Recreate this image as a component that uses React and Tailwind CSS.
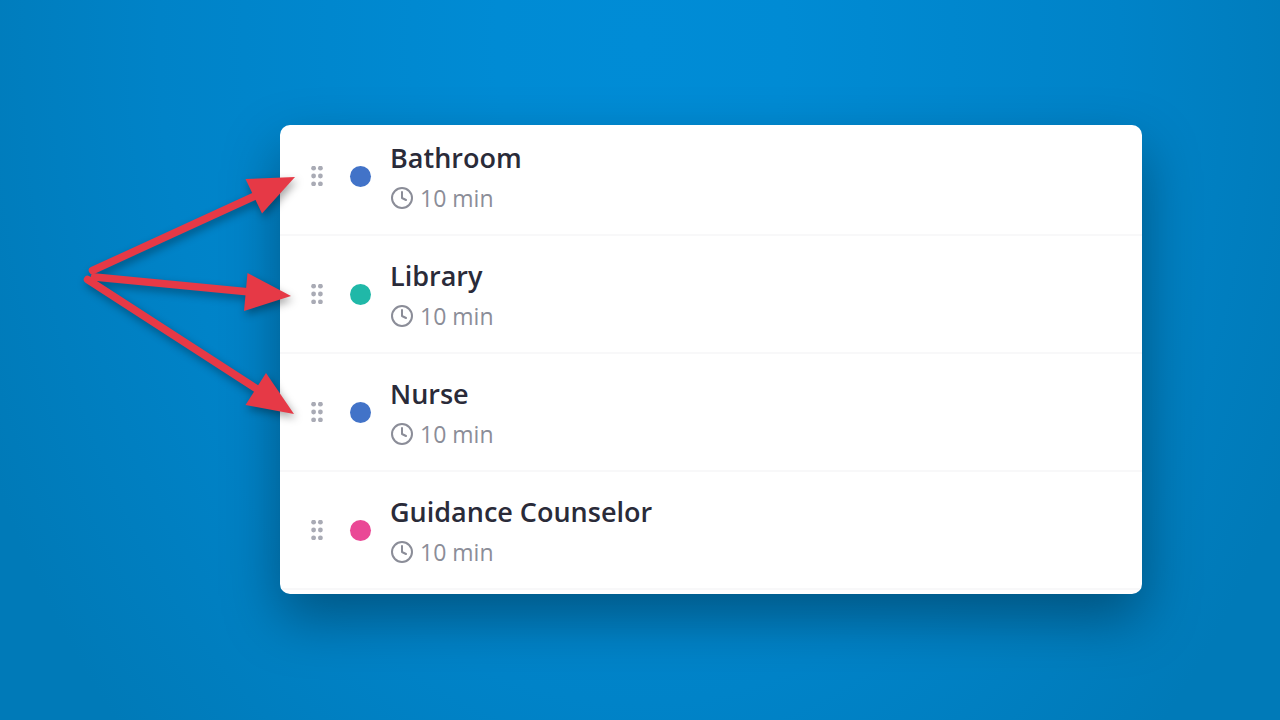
import { Clock } from 'lucide-react';

const passes = [
    { id: 1, name: 'Bathroom', minutes: 10, dot: 'bg-[#4273c8]' },
    { id: 2, name: 'Library', minutes: 10, dot: 'bg-[#20b8a8]' },
    { id: 3, name: 'Nurse', minutes: 10, dot: 'bg-[#4273c8]' },
    { id: 4, name: 'Guidance Counselor', minutes: 10, dot: 'bg-[#ea4896]' },
];

function Grip() {
    return (
        <svg width="12" height="20" viewBox="0 0 12 20" fill="#a9abb5" aria-hidden="true">
            {[2.2, 10, 17.8].map(y => (
                <g key={y}>
                    <circle cx="2.6" cy={y} r="2.4" />
                    <circle cx="9.4" cy={y} r="2.4" />
                </g>
            ))}
        </svg>
    );
}

function PassRow({ pass }) {
    return (
        <li className="flex items-center border-b-2 border-[#f8f8f9] py-[18px] pl-[31px] first:pt-[11px]">
            <button type="button" aria-label={`Reorder ${pass.name}`} className="w-3 cursor-grab">
                <Grip />
            </button>
            <span className={`ml-[27px] size-[21px] rounded-full ${pass.dot}`} />
            <div className="ml-[19px]">
                <h2 className="text-[27px] leading-11 font-semibold text-[#2a2b39]">{pass.name}</h2>
                <p className="flex items-center gap-1.5 text-[23px] leading-9 text-[#8b8d98]">
                    <Clock size={24} strokeWidth={2} aria-hidden="true" />
                    {pass.minutes} min
                </p>
            </div>
        </li>
    );
}

// Callout arrows pointing from a common origin to the first three grips
function Arrows() {
    return (
        <svg
            className="pointer-events-none absolute top-0 -left-[200px] overflow-visible drop-shadow-[2px_4px_4px_rgba(0,0,0,0.35)]"
            width="220"
            height="300"
            viewBox="80 125 220 300"
            fill="#e63946"
            stroke="#e63946"
            aria-hidden="true"
        >
            <g strokeWidth="7.500" strokeLinecap="round">
                <path d="M92.500 270.500 256 195.500" />
                <path d="M94.500 277 250 292" />
                <path d="M87.500 279.500 260 391" />
            </g>
            <g stroke="none">
                <path d="M295 177 245.500 179 262 213.500z" />
                <path d="M291 296 247.500 273 244 311z" />
                <path d="M294 414 266 373 245.500 405z" />
            </g>
        </svg>
    );
}

export default function App() {
    return (
        <main className="min-h-screen bg-[radial-gradient(800px_1100px_at_50%_6%,#008cd6_0%,#008bd4_18%,#0083c8_60%,#007ab8_90%)] pt-[125px] pr-[138px] pb-[125px] pl-[280px] font-['Open_Sans','Noto_Sans',sans-serif]">
            <div className="relative">
                <div className="overflow-hidden rounded-[10px] bg-white pb-1 shadow-[0_24px_56px_rgba(0,0,0,0.35)]">
                    <ul>
                        {passes.map(p => (
                            <PassRow key={p.id} pass={p} />
                        ))}
                    </ul>
                </div>
                <Arrows />
            </div>
        </main>
    );
}
